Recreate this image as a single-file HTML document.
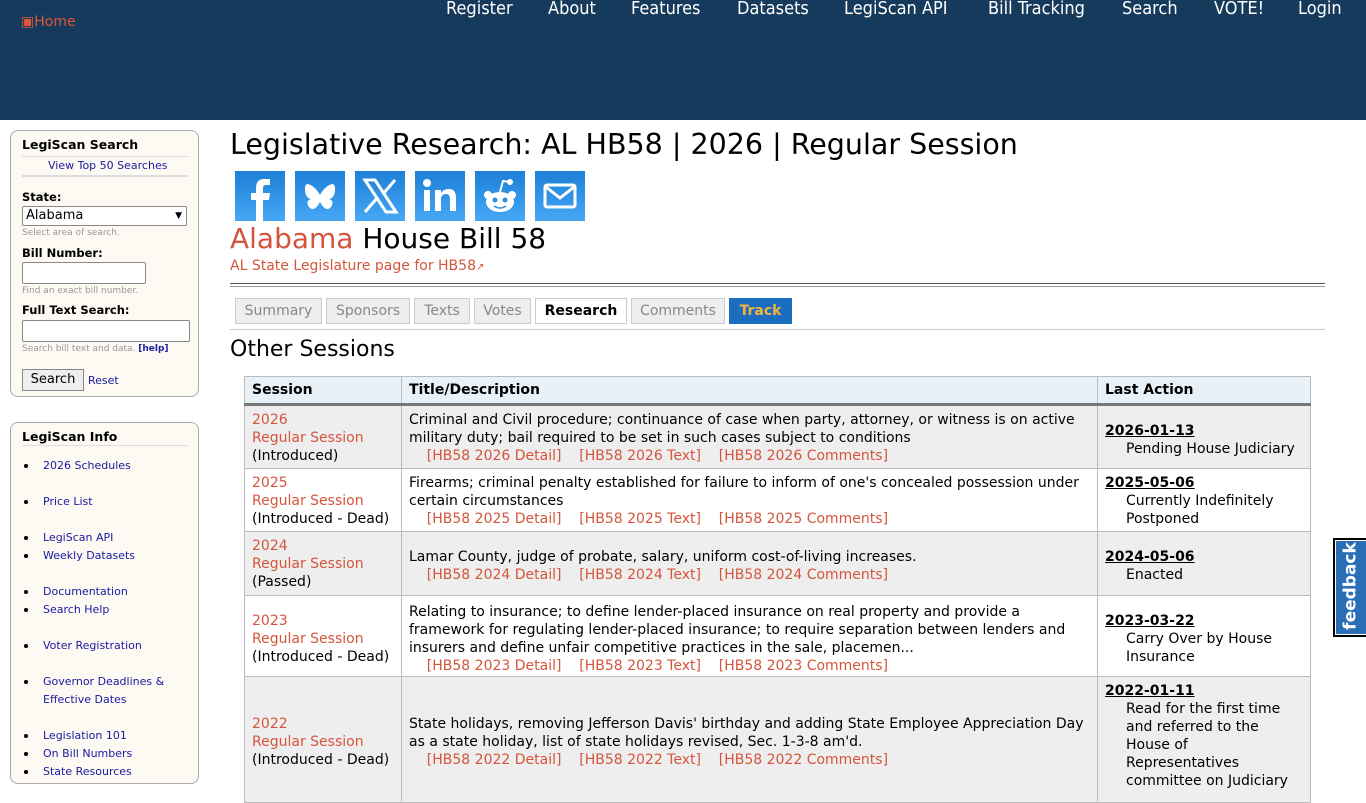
<!DOCTYPE html>
<html><head><meta charset="utf-8"><style>
body{margin:0;width:1366px;height:768px;overflow:hidden;background:#fff;font-family:"DejaVu Sans","Liberation Sans",sans-serif;position:relative}
a{text-decoration:none}
.hdr{position:absolute;left:0;top:0;width:1366px;height:120px;background:#163a5c}
.nav{position:absolute;top:-2px;color:#fff;font-family:"DejaVu Sans Condensed","DejaVu Sans",sans-serif;font-size:18px;white-space:nowrap}
.home{position:absolute;left:21px;top:14px;color:#e0553a;font-size:14px}
.box{position:absolute;left:10px;width:187px;background:#fdf9f3;border:1px solid #aaa;border-radius:8px}
.box h3{margin:0;font-size:12.5px;font-weight:bold;position:absolute;left:11px}
.sm{font-size:9px;color:#999;position:absolute;left:11px}
.lb{font-size:11.5px;font-weight:bold;position:absolute;left:11px}
.inp{position:absolute;left:11px;border:1px solid #888;border-radius:2px;background:#fff;height:20px}
.box ul{position:absolute;left:0;top:0;margin:0;padding:0;list-style:none}
.box li{position:absolute;left:32px;font-size:11px;line-height:18px;color:#1a1aa0;white-space:nowrap}
.box li:before{content:"";position:absolute;left:-19px;top:7px;width:4px;height:4px;border-radius:50%;background:#000}
.soc{position:absolute;top:171px;width:50px;height:50px;background:linear-gradient(#1d7fd6,#46a8f5)}
.tab{position:absolute;top:298px;height:24px;border:1px solid #ccc;background:#eee;color:#888;font-size:14px;line-height:24px;text-align:center}
table{position:absolute;left:244px;top:376px;width:1067px;border-collapse:collapse;font-size:14px;line-height:18px}
td,th{border:1px solid #bbb;vertical-align:top;padding:5px 7px 0;text-align:left}
th{background:#e9f1f8;height:22px;padding-top:4px;font-weight:bold;border-bottom:3px solid #777}
.r{color:#d4553b}
.g{background:#eee}
.d{font-weight:bold;text-decoration:underline}
.ind{padding-left:21px;display:block}
</style></head><body>
<div class="hdr">
<span class="home">&#9635;Home</span>
<span class="nav" style="left:446px">Register</span>
<span class="nav" style="left:548px">About</span>
<span class="nav" style="left:631px">Features</span>
<span class="nav" style="left:737px">Datasets</span>
<span class="nav" style="left:844px">LegiScan API</span>
<span class="nav" style="left:988px">Bill Tracking</span>
<span class="nav" style="left:1122px">Search</span>
<span class="nav" style="left:1214px">VOTE!</span>
<span class="nav" style="left:1298px">Login</span>
</div>

<div class="box" style="top:130px;height:265px">
<h3 style="top:6px">LegiScan Search</h3>
<div style="position:absolute;left:11px;top:25px;width:166px;border-top:1px solid #ddd"></div>
<div style="position:absolute;left:37px;top:28px;font-size:11px;color:#1a1aa0">View Top 50 Searches</div>
<div style="position:absolute;left:11px;top:44px;width:166px;border-top:2px solid #ddd"></div>
<div class="lb" style="top:59px">State:</div>
<div class="inp" style="top:75px;width:160px;height:18px;font-size:13px;line-height:18px;padding-left:3px">Alabama<span style="position:absolute;right:4px;font-size:9px">&#9660;</span></div>
<div class="sm" style="top:97px">Select area of search.</div>
<div class="lb" style="top:115px">Bill Number:</div>
<div class="inp" style="top:131px;width:122px"></div>
<div class="sm" style="top:155px">Find an exact bill number.</div>
<div class="lb" style="top:172px">Full Text Search:</div>
<div class="inp" style="top:189px;width:166px"></div>
<div class="sm" style="top:213px">Search bill text and data. <b style="color:#1a1aa0">[help]</b></div>
<div style="position:absolute;left:11px;top:238px;width:60px;height:20px;border:1px solid #888;background:#eee;font-size:13px;text-align:center;line-height:20px">Search</div>
<div style="position:absolute;left:77px;top:243px;font-size:11px;color:#1a1aa0">Reset</div>
</div>

<div class="box" style="top:422px;height:360px">
<h3 style="top:6px">LegiScan Info</h3>
<div style="position:absolute;left:11px;top:22px;width:166px;border-top:1px solid #ddd"></div>
<ul>
<li style="top:34px">2026 Schedules</li>
<li style="top:70px">Price List</li>
<li style="top:106px">LegiScan API</li>
<li style="top:124px">Weekly Datasets</li>
<li style="top:160px">Documentation</li>
<li style="top:178px">Search Help</li>
<li style="top:214px">Voter Registration</li>
<li style="top:250px">Governor Deadlines &amp;<br>Effective Dates</li>
<li style="top:304px">Legislation 101</li>
<li style="top:322px">On Bill Numbers</li>
<li style="top:340px">State Resources</li>
</ul>
</div>

<div style="position:absolute;left:230px;top:128px;font-size:28.5px;white-space:nowrap">Legislative Research: AL HB58 | 2026 | Regular Session</div>

<div class="soc" style="left:235px"><svg width="50" height="50"><path d="M28 50V29h6l1-7h-7v-5c0-2 1-3 3-3h4V8h-6c-6 0-8 4-8 9v5h-5v7h5v21z" fill="#fff"/></svg></div>
<div class="soc" style="left:295px"><svg width="50" height="50"><path d="M13 13c5 1 10 7 12 11 2-4 7-10 12-11 3 0 3 3 3 5 0 4-1 9-6 10 4 1 5 5 1 9-4 3-7-1-10-6-3 5-6 9-10 6-4-4-3-8 1-9-5-1-6-6-6-10 0-2 0-5 3-5z" fill="#fff"/></svg></div>
<div class="soc" style="left:355px"><svg width="50" height="50"><path d="M10 9h10l21 32H31zM10 41L23 26M40 9L28 23" stroke="#fff" stroke-width="3" fill="none"/></svg></div>
<div class="soc" style="left:415px"><svg width="50" height="50"><rect x="9" y="19" width="6" height="21" fill="#fff"/><circle cx="12" cy="12" r="4" fill="#fff"/><path d="M20 19h6v3c2-3 5-4 8-4 5 0 7 3 7 9v13h-6V28c0-3-1-5-4-5s-5 2-5 5v12h-6z" fill="#fff"/></svg></div>
<div class="soc" style="left:475px"><svg width="50" height="50"><ellipse cx="25" cy="31" rx="14" ry="10" fill="#fff"/><circle cx="13" cy="24" r="4" fill="#fff"/><circle cx="37" cy="24" r="4" fill="#fff"/><circle cx="35" cy="11" r="3" fill="#fff"/><path d="M25 21l3-11 7 1" stroke="#fff" stroke-width="2" fill="none"/><circle cx="20" cy="29" r="2.5" fill="#2a8ee2"/><circle cx="30" cy="29" r="2.5" fill="#2a8ee2"/><path d="M19 35q6 4 12 0" stroke="#2a8ee2" stroke-width="1.5" fill="none"/></svg></div>
<div class="soc" style="left:535px"><svg width="50" height="50"><rect x="10" y="14" width="30" height="22" rx="2" stroke="#fff" stroke-width="3" fill="none"/><path d="M11 16l14 11 14-11" stroke="#fff" stroke-width="3" fill="none"/></svg></div>

<div style="position:absolute;left:230px;top:222px;font-size:28px;white-space:nowrap"><span class="r">Alabama</span> House Bill 58</div>
<div class="r" style="position:absolute;left:230px;top:258px;font-size:14px">AL State Legislature page for HB58<span style="font-size:10px">&#8599;</span></div>
<div style="position:absolute;left:230px;top:283px;width:1095px;height:2px;border-top:1px solid #555;border-bottom:1px solid #999"></div>

<div class="tab" style="left:235px;width:85px">Summary</div>
<div class="tab" style="left:326px;width:82px">Sponsors</div>
<div class="tab" style="left:414px;width:54px">Texts</div>
<div class="tab" style="left:474px;width:55px">Votes</div>
<div class="tab" style="left:535px;width:90px;background:#fff;color:#000;font-weight:bold">Research</div>
<div class="tab" style="left:631px;width:92px">Comments</div>
<div class="tab" style="left:729px;width:61px;background:#1a6dbf;border-color:#1a6dbf;color:#f7b23b;font-weight:bold">Track</div>
<div style="position:absolute;left:230px;top:329px;width:1095px;border-top:1px solid #ccc"></div>

<div style="position:absolute;left:230px;top:337px;font-size:22px">Other Sessions</div>

<table>
<tr><th style="width:142px">Session</th><th>Title/Description</th><th style="width:198px">Last Action</th></tr>
<tr class="g" style="height:64px"><td><span class="r">2026<br>Regular Session</span><br>(Introduced)</td><td>Criminal and Civil procedure; continuance of case when party, attorney, or witness is on active military duty; bail required to be set in such cases subject to conditions<br><span class="r">&nbsp;&nbsp;&nbsp;&nbsp;[HB58 2026 Detail]&nbsp;&nbsp;&nbsp;&nbsp;[HB58 2026 Text]&nbsp;&nbsp;&nbsp;&nbsp;[HB58 2026 Comments]</span></td><td style="vertical-align:middle"><span class="d">2026-01-13</span><span class="ind">Pending House Judiciary</span></td></tr>
<tr style="height:63px"><td><span class="r">2025<br>Regular Session</span><br>(Introduced - Dead)</td><td>Firearms; criminal penalty established for failure to inform of one's concealed possession under certain circumstances<br><span class="r">&nbsp;&nbsp;&nbsp;&nbsp;[HB58 2025 Detail]&nbsp;&nbsp;&nbsp;&nbsp;[HB58 2025 Text]&nbsp;&nbsp;&nbsp;&nbsp;[HB58 2025 Comments]</span></td><td><span class="d">2025-05-06</span><span class="ind">Currently Indefinitely Postponed</span></td></tr>
<tr class="g" style="height:64px"><td><span class="r">2024<br>Regular Session</span><br>(Passed)</td><td style="vertical-align:middle">Lamar County, judge of probate, salary, uniform cost-of-living increases.<br><span class="r">&nbsp;&nbsp;&nbsp;&nbsp;[HB58 2024 Detail]&nbsp;&nbsp;&nbsp;&nbsp;[HB58 2024 Text]&nbsp;&nbsp;&nbsp;&nbsp;[HB58 2024 Comments]</span></td><td style="vertical-align:middle"><span class="d">2024-05-06</span><span class="ind">Enacted</span></td></tr>
<tr style="height:81px"><td style="vertical-align:middle"><span class="r">2023<br>Regular Session</span><br>(Introduced - Dead)</td><td style="vertical-align:middle">Relating to insurance; to define lender-placed insurance on real property and provide a framework for regulating lender-placed insurance; to require separation between lenders and insurers and define unfair competitive practices in the sale, placemen...<br><span class="r">&nbsp;&nbsp;&nbsp;&nbsp;[HB58 2023 Detail]&nbsp;&nbsp;&nbsp;&nbsp;[HB58 2023 Text]&nbsp;&nbsp;&nbsp;&nbsp;[HB58 2023 Comments]</span></td><td style="vertical-align:middle"><span class="d">2023-03-22</span><span class="ind">Carry Over by House Insurance</span></td></tr>
<tr class="g" style="height:126px"><td style="vertical-align:middle"><span class="r">2022<br>Regular Session</span><br>(Introduced - Dead)</td><td style="vertical-align:middle">State holidays, removing Jefferson Davis' birthday and adding State Employee Appreciation Day as a state holiday, list of state holidays revised, Sec. 1-3-8 am'd.<br><span class="r">&nbsp;&nbsp;&nbsp;&nbsp;[HB58 2022 Detail]&nbsp;&nbsp;&nbsp;&nbsp;[HB58 2022 Text]&nbsp;&nbsp;&nbsp;&nbsp;[HB58 2022 Comments]</span></td><td><span class="d">2022-01-11</span><span class="ind">Read for the first time and referred to the House of Representatives committee on Judiciary</span></td></tr>
</table>

<div style="position:absolute;left:1333px;top:538px;width:33px;height:99px;background:#000"><div style="position:absolute;left:2px;top:2px;width:33px;height:95px;background:#2a6fb6;border:1px solid #fff;box-sizing:border-box"></div><div style="position:absolute;left:-30px;top:38px;width:95px;transform:rotate(-90deg);color:#fff;font-weight:bold;font-size:17px;text-align:center">feedback</div></div>
</body></html>
